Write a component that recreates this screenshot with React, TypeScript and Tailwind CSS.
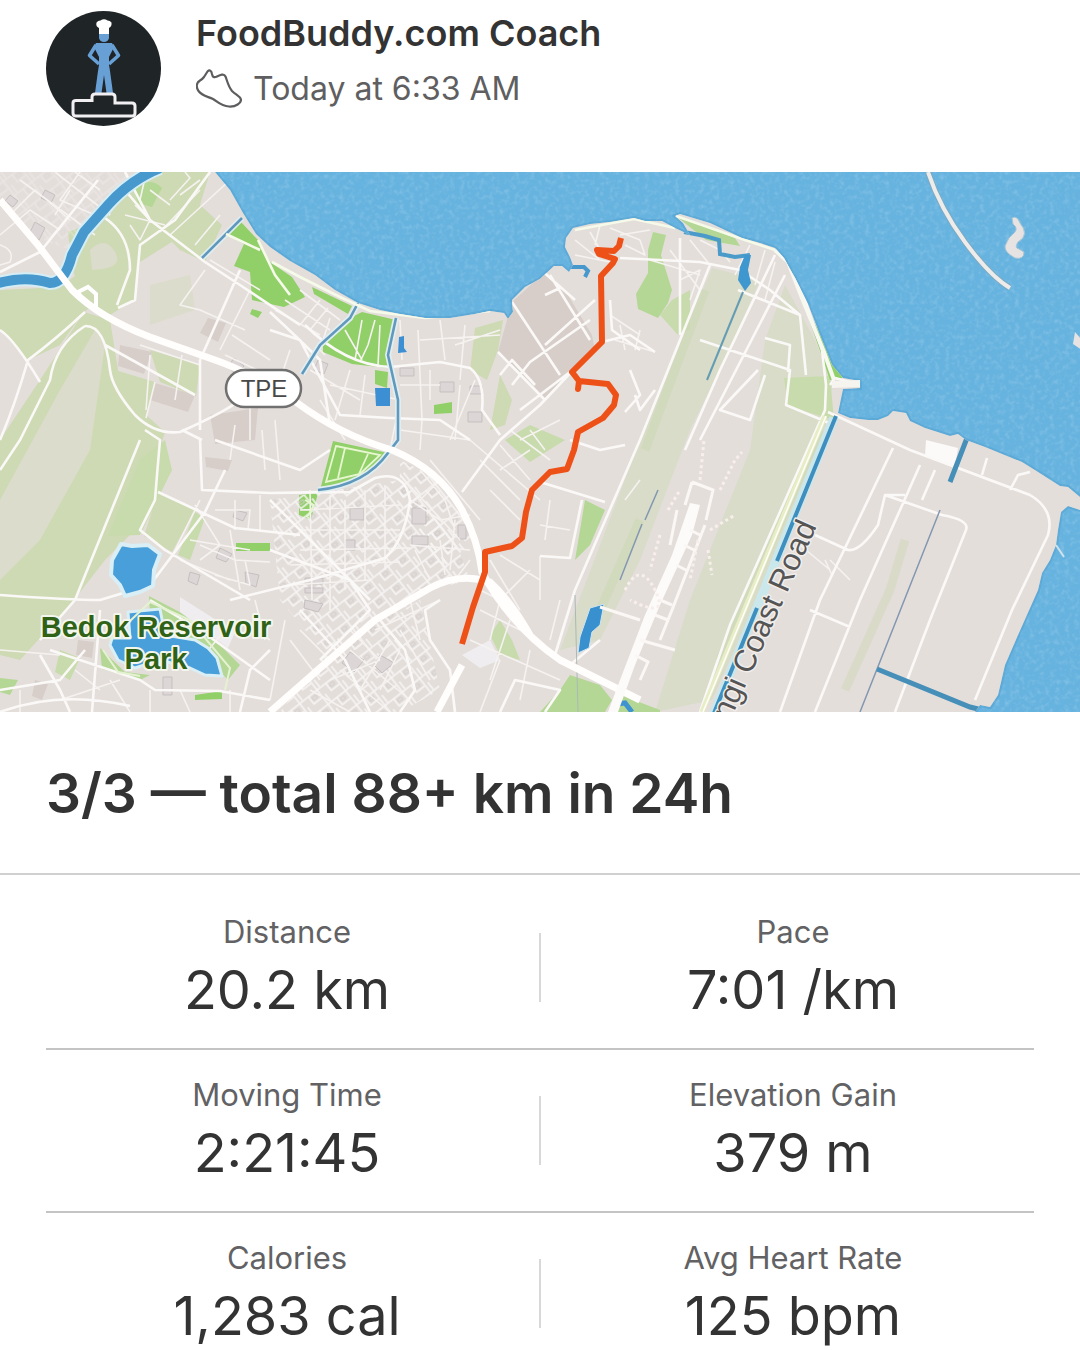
const stats = [
  [
    { label: "Distance", value: "20.2 km" },
    { label: "Pace", value: "7:01 /km" },
  ],
  [
    { label: "Moving Time", value: "2:21:45" },
    { label: "Elevation Gain", value: "379 m" },
  ],
  [
    { label: "Calories", value: "1,283 cal" },
    { label: "Avg Heart Rate", value: "125 bpm" },
  ],
];

function Avatar() {
  return (
    <svg viewBox="0 0 115 115" className="size-[115px] shrink-0" role="img" aria-label="FoodBuddy.com Coach">
      <circle cx="57.5" cy="57.5" r="57.5" fill="#1f2426" />
      <g fill="#68a0d6">
        <path d="M53 20H63V27Q62 31 58 31Q54 31 53 27Z" />
        <path d="M50 32H66L68 36L63 46V54L64 60L67 82H60.500L58 64L55.500 82H49L52 60L53 54V46L48 36Z" />
        <path d="M50 34L43.500 44.500L53 53M66 34L72.500 44.500L63 53" fill="none" stroke="#68a0d6" strokeWidth="3.600" strokeLinejoin="round" />
      </g>
      <path d="M53 23V17Q49.500 15.500 50.500 11.500Q52 9.500 54.500 9.500Q58 7 61.500 9.500Q64 9.500 65.500 11.500Q66 15.500 63 17V23Z" fill="#fff" />
      <path d="M30 105Q27 105 27 102V92Q27 89.500 30 89.500H46V86Q46 83 49 83H66Q69 83 69 86V92H86Q89 92 89 95V102Q89 105 86 105Z" fill="#1f2426" stroke="#f1eff1" strokeWidth="3" />
    </svg>
  );
}

function ShoeIcon() {
  return (
    <svg viewBox="196 69 47 40" className="h-10 w-[47px] shrink-0" fill="none" stroke="#5d5d5f" strokeWidth="2.2" strokeLinejoin="round" aria-hidden="true">
      <path d="M207.500 71.500L204 77Q202.500 79 200 80.500C196 83 196 87 198.500 91C202 96 208 96.500 213 99C218 102 221 106 229 106.500C236 107 241 103 241 99.500C240 96 236 95 232 91C228 86 227 80 225.500 76.500C224 73 220 75 217 76.500C214 78 212.500 77 212 74C211.500 70.500 209.500 69.500 207.500 71.500Z" />
    </svg>
  );
}

const LAND =
  "M0 172H215L230 190L243 213L256 234L270 247L290 261L315 275L335 290L358 303L380 310L400 314L425 318L450 318L475 314L490 311L504 313L508 319L513 312L512 300L525 287L540 279L554 266L562 266L569 272L573 265L570 257L565 247L566 238L573 228L590 224L610 222L634 218L645 221L662 221L675 228L690 235L683 223L675 216L680 214L710 223L742 238L760 243L775 248L784 258L795 278L808 304L820 335L832 365L843 378L860 381V388L843 389L838 413L850 418L868 420L878 420L888 416L893 411L906 413L910 421L925 428L950 436L958 434L966 440L985 447L1022 462L1038 472L1060 486L1068 487L1080 497V510L1068 506L1061 512L1058 530L1056 545L1050 560L1042 573L1038 590L1030 608L1018 635L1005 665L998 695L990 707L980 705L975 712H0Z";

const PALE_GREEN = [
  "M0 290L60 287L75 276L100 300L84 312L60 345L28 360L0 330Z",
  "M68 232L110 215L130 178L160 172H210L200 205L175 240L140 262L135 300L105 318L80 290L72 268Z",
  "M84 312L110 320L118 370L135 405L165 432L150 480L135 530L105 560L70 605L20 660L0 655V440L40 380Z",
  "M170 240L200 205L222 225L205 262L180 250Z",
  "M150 350L200 365L196 396L160 382Z",
  "M115 370L155 382L146 418L122 408Z",
  "M158 492L195 510L172 552L144 536Z",
  "M475 328L503 320L498 350L487 380L470 370Z",
  "M500 375L512 400L505 425L490 430Z",
];

const AIRFIELD = [
  "M712 268L760 280L725 360L690 430L640 560L600 640L560 650L640 440Z",
  "M785 285L815 340L832 385L828 430L775 560L712 700L655 712L690 600L750 450L765 340Z",
];

const SOFT_PATCHES = [
  "M95 330L105 345L90 450L40 540L0 580V500L60 390Z",
  "M90 250Q105 235 115 252T92 270Z",
  "M150 285L190 275L195 310L150 325Z",
];

const GREEN = [
  "M241 222L226 234L244 244L234 266L250 272L252 300L284 307L305 297L292 277L270 262L258 240Z",
  "M323 343L350 318L362 312L396 320L388 368L352 364L323 352Z",
  "M333 441L388 453L362 479L320 490Z",
  "M299 495L318 493L311 520L299 515Z",
  "M375 370L388 372L387 388L375 384Z",
  "M434 405L452 402L452 413L434 414Z",
  "M236 543H270V551H236Z",
  "M195 695L222 691V699L195 700Z",
  "M312 287L352 306L348 314L314 294Z",
  "M798 288L832 360L843 378L830 380L818 345Z",
  "M252 309L262 312L258 318L250 314Z",
];

const MID_GREEN = [
  "M653 232L666 235L661 255L672 290L668 303L658 318L638 309L636 294L648 273L648 250Z",
  "M134 190Q150 175 162 188L152 207L138 203Z",
  "M149 596L195 620L240 665L228 680L190 640L150 615Z",
  "M100 648L125 672L150 675L140 680L102 669Z",
  "M676 216L735 238L740 246L706 240Z",
  "M570 675L600 685L612 700L605 712H540L560 690Z",
  "M618 694L660 710V712H610Z",
  "M585 500L605 510L590 545L575 560Z",
  "M0 678L18 680L10 695L0 692Z",
];

const FADED_GREEN = [
  "M672 300L690 290L690 330L678 335L660 315Z",
  "M784 378L830 376L834 420L788 406Z",
  "M500 620L512 640L520 660L500 655L490 635Z",
  "M165 440L172 470L140 535L108 536L140 460Z",
  "M60 650L80 658L70 680L55 672Z",
  "M195 512L205 518L190 560L178 555Z",
  "M505 440L530 425L565 440L530 462Z",
];

const BROWN = [
  "M512 302L545 272L565 290L592 335L595 350L545 400L498 352Z",
  "M120 345L152 352L144 374L118 366Z",
  "M155 383L195 395L188 412L150 400Z",
  "M208 318L226 323L218 342L200 333Z",
  "M210 415L258 408L255 440L215 444Z",
  "M205 457L232 460L228 471L206 467Z",
  "M35 680L48 684L42 700L32 696Z",
  "M78 640L94 642L92 658L76 655Z",
];

const MAJOR = [
  "M0 200L38 245L72 290Q100 318 150 337L215 360Q250 372 296 402Q340 435 392 450Q440 470 462 510Q478 540 482 572Q510 625 560 660L612 686L640 700",
  "M270 712L375 620L430 588Q460 572 490 582Q510 600 530 635",
  "M437 712L462 665",
];

const ROADS = [
  "M85 312Q55 340 28 360Q15 405 0 440",
  "M85 326Q55 345 50 380L20 440L0 470",
  "M0 330Q15 340 40 382",
  "M85 326Q105 325 110 370Q112 388 135 415Q155 435 180 432Q225 412 240 400",
  "M140 440L75 600L40 640",
  "M145 430L160 440L157 475L155 500L140 530L165 550L250 600",
  "M0 595Q70 600 100 600L150 585L205 512L225 470",
  "M158 492L235 528L300 535",
  "M200 440L202 490L270 493L320 492",
  "M182 430L202 440M200 360L200 430M240 270L200 360",
  "M105 345L195 395",
  "M0 272L40 252L98 180",
  "M125 190L150 220L205 262L240 285L300 325",
  "M210 172L175 220L140 245L135 300L118 308",
  "M105 218Q130 235 130 270L117 305",
  "M125 172L150 220",
  "M215 440L300 470L330 450",
  "M230 600L310 580L385 558Q405 540 410 500Q405 470 375 478L350 492L270 493",
  "M305 325Q345 365 390 367L440 362L470 368Q485 380 482 410L500 435",
  "M270 330L300 340L340 415L390 418L440 420L470 440",
  "M270 312Q300 340 320 360L330 425",
  "M270 550L350 580L370 610L320 660",
  "M300 610L345 660L370 712M270 500L330 560L370 600",
  "M592 350L540 405L500 440L462 492",
  "M545 345L595 300M575 300L530 260M512 302L560 375M498 352L545 400",
  "M512 385L530 362L590 320M500 375L512 360L535 385",
  "M550 275L590 340M545 295L560 288",
  "M620 258L700 262L740 270L770 290L800 315M680 238L680 335",
  "M710 265L680 340L640 440L575 590L555 655L570 665L600 640",
  "M785 275L700 440M775 255L720 370L685 450",
  "M738 290L800 315L806 375",
  "M788 258L805 300L822 350L826 385L825 410L730 625L700 712",
  "M830 385L835 378L858 384",
  "M828 412L910 450L1030 495Q1055 510 1048 535L1012 610L975 700",
  "M893 448L820 600L780 712M920 465L860 600L815 712M935 470L922 500",
  "M885 495L942 515Q970 520 966 530L930 620L895 712",
  "M815 535L848 550Q860 552 878 525L885 495L905 495M810 610L850 627",
  "M1010 490L1018 475L1030 472M982 475L987 458",
  "M610 300L612 330L640 350M602 342L630 335L655 352",
  "M630 370L640 395L625 412M570 372L520 410",
  "M635 395L640 410L655 390",
  "M700 340L790 370L786 405L834 425",
  "M765 338L790 345L788 372M758 370L720 410L750 420L765 375",
  "M540 482L605 502M582 500L570 558L540 556",
  "M400 712L415 690L405 650L380 620M455 712L450 670L430 640L425 610L440 600",
  "M50 650L140 680L155 690L220 691L270 700",
  "M40 655L60 690L70 712M100 610L92 712M0 690L60 680L85 650",
  "M150 600L200 630L270 680M240 712L250 670L270 650",
  "M500 712L515 680L560 690L545 712",
  "M570 440L600 450L625 445",
  "M0 712Q60 690 130 706",
];

const MINOR = [
  "M20 180L95 235M55 172L110 215M0 235L30 210L60 230M10 215L35 190L70 220",
  "M28 232L45 250M70 190L55 215M80 172L60 200L95 215",
  "M0 245Q15 250 10 262L0 265M75 172L100 190",
  "M140 345L200 365M150 355L146 410M182 355L175 400M155 382L146 418",
  "M170 235L230 180M160 232L200 190M210 260L260 290M195 245L220 215",
  "M180 195L200 180M170 200L190 178L185 172M150 190L170 205",
  "M135 205L150 220L140 240L130 225M125 215L165 225M145 178L140 200",
  "M205 270L180 305L200 310L245 330M250 290L220 350M232 335L270 360M225 355L290 385",
  "M300 290L340 320M285 300L330 330M275 310L320 335M300 325L320 300M310 330L328 308",
  "M330 318L320 350L325 355M345 330L362 360M362 320L355 360M375 320L368 345L360 362M380 325L378 365",
  "M400 320L402 360M418 330L422 420L420 450M440 320L445 360M455 345L500 330M465 325L460 380M420 340L500 335",
  "M400 385L440 385M430 370L430 400M475 380L450 440M460 385L455 440M400 430L470 440M400 400L390 450",
  "M330 385L400 400M350 370L335 420M310 370L360 400M320 400L345 440M365 375L360 415M290 350L280 380",
  "M235 425L230 460M250 405L250 440M262 430L265 470M275 420L280 480",
  "M230 530L235 560L270 562M195 505L220 545L200 560M200 500L170 560M215 510L250 510L248 530M235 500V530M260 495V530",
  "M200 545L235 560L240 590M180 560L230 580M190 540L250 550M215 575L250 585L245 560",
  "M300 530L400 530M310 490L312 600M330 495V610M345 500V590M365 490V580M385 485V570M300 510L400 505M300 550L410 548M290 565L400 562M290 585L370 580",
  "M410 500L440 520L470 515M400 475L460 540M420 470L445 500L455 530M440 480L420 500M430 460L480 520",
  "M410 545L470 550M415 550L430 580M440 540L445 575M455 520L450 570M470 560L455 580",
  "M500 445L530 480M480 460L520 500M490 490L520 520M470 440L540 500M500 470L530 450",
  "M520 440L560 420M510 430L550 460M530 430L545 450",
  "M375 630L440 600M350 650L410 700M340 670L390 712M330 680L380 660M390 640L360 690M400 630L430 680M310 690L350 712",
  "M380 690L400 650M420 640L410 600M350 630L380 660M300 630L330 660M290 640L320 680M285 620L270 700",
  "M480 590L500 600L490 640M510 620L490 680M470 640L560 680M500 660L480 712M530 650L520 700M480 610L520 630",
  "M540 556L540 600M490 560L520 610M500 555L540 580M530 570L500 600M560 600L550 640",
  "M575 240L600 260M590 232L600 250M610 228L640 240M620 235L650 230M575 255L610 262M600 225L595 245M625 245L645 255L640 240",
  "M650 260L700 275M670 250L700 290M690 240L710 265M680 280L700 270L690 300M700 240L720 250",
  "M720 250L730 262M750 245L735 275M765 250L755 285M775 262L765 300",
  "M615 340L655 352M620 325L625 350M640 330L635 350M610 315L640 335",
  "M550 500L545 540M540 525L570 530M640 480L625 500",
  "M0 650L60 655M20 690L20 712M110 680L130 712M150 690L150 712M60 700L120 680M180 690L190 712M75 670L100 690",
  "M225 630L200 660M240 620L270 640M230 690L230 712M255 600L265 640",
  "M800 545L830 570M830 560L850 580M825 560L832 575",
];

const CHANNELS = ["M302 374L320 345L350 318L358 303", "M396 318L388 355L398 400V440L388 453", "M242 218L202 258", "M388 453Q365 485 318 490"];

const BUILDINGS =
  "M45 190l10 5-4 8-10-5zM10 195l8 6-5 6-8-6zM35 222l10 6-6 12-10-6zM234 358l10 8-8 8-8-7zM318 360l10 4-4 10-10-4zM400 368h14v8h-14zM440 382h14v10h-14zM470 386h12v8h-12zM468 412h14v10h-14zM350 508h14v12h-14zM412 508h14v16h-14zM412 536h16v9h-16zM458 525h8v14h-8zM345 540h10v10h-10zM305 578h18v6h-18zM305 588h18v5h-18zM350 652l14 8-10 12-12-9zM380 655l14 8-12 10-8-8zM245 572l14 3-3 12-10-4zM190 572l10 3-3 10-9-4zM220 548l12 6-6 8-10-4zM235 510l12 3-4 8-10-4zM163 677h9v18h-9zM305 600l18 4-5 8-14-4z";

function RouteMap() {
  return (
    <svg viewBox="0 172 1080 540" className="block w-full" role="img" aria-label="Map of the run route">
      <defs>
        <filter id="ripple" x="0" y="0" width="100%" height="100%">
          <feTurbulence type="fractalNoise" baseFrequency="0.2" numOctaves="2" seed="4" />
          <feColorMatrix values="0 0 0 0 0.62  0 0 0 0 0.83  0 0 0 0 0.96  1.8 0 0 0 -0.84" />
        </filter>
        <pattern id="blocks" width="22" height="18" patternUnits="userSpaceOnUse" patternTransform="rotate(-38)">
          <path d="M0 1H22M1 0V18M12 1V10H22M5 18V9" fill="none" stroke="#f8f6f5" strokeWidth="1.5" />
          <path d="M14 4h5v3h-5z" fill="none" stroke="#d2cccb" />
        </pattern>
        <clipPath id="shore">
          <path d={LAND} />
        </clipPath>
      </defs>

      <rect y="172" width="1080" height="540" fill="#67b3df" />
      <rect y="172" width="1080" height="540" filter="url(#ripple)" opacity="0.3" />
      <path d={LAND} fill="#e4dedb" stroke="#4f9fd0" strokeWidth="4" strokeOpacity="0.5" />
      <path d={LAND} fill="#e4dedb" />

      <g clipPath="url(#shore)">
        <path d={PALE_GREEN.join("")} fill="#cddab4" />
        <path d={AIRFIELD.join("")} fill="#d8dcc8" />
        <path d={SOFT_PATCHES.join("")} fill="#dbdccb" />
        <path d={BROWN.join("")} fill="#d7cec9" />
        <path d={FADED_GREEN.join("")} fill="#c8dbac" />
        <path d={MID_GREEN.join("")} fill="#b4d795" />
        <path d={GREEN.join("")} fill="#91cf69" />
        <path d="M270 500L400 480L455 540L470 580L430 590L330 660L280 600Z" fill="url(#blocks)" />
        <path d="M320 660L420 600L440 690L400 712H280Z" fill="url(#blocks)" />
        <path d="M0 172H130L70 250L30 235L0 200Z" fill="url(#blocks)" opacity="0.3" />
        <path d="M400 460L440 480L475 540L440 570L400 500Z" fill="url(#blocks)" />
        <path d="M645 450L705 290M640 520L600 610M820 430L720 660" stroke="#ced9b8" strokeWidth="9" fill="none" opacity="0.7" />
        <path d="M905 540L890 590L845 690" stroke="#d6d8c2" strokeWidth="9" fill="none" opacity="0.7" />
        <path d={BUILDINGS} fill="#dcd6d6" stroke="#c5bfc0" />
        <path d="M180 597L235 632L228 648L180 612ZM462 655L490 640L500 660L480 668Z" fill="#efedf0" />
        <path d="M926 440L958 448L955 466L925 456Z" fill="#fbfaf9" />
        <path d={MINOR.join("")} fill="none" stroke="#f5f2f0" strokeWidth="1.6" strokeLinejoin="round" />
        <path d={ROADS.join("")} fill="none" stroke="#fbf9f7" strokeWidth="2.6" strokeLinejoin="round" />

        <path d="M-5 284Q25 275 50 283Q65 283 72 255L84 232L108 205Q130 180 160 168" fill="none" stroke="#d5edf4" strokeWidth="14" />
        <path d="M-5 284Q25 275 50 283Q65 283 72 255L84 232L108 205Q130 180 160 168" fill="none" stroke="#4698cd" strokeWidth="10" />
        <path d={CHANNELS.join("")} fill="none" stroke="#e0eef2" strokeWidth="6" />
        <path d={CHANNELS.join("")} fill="none" stroke="#6199bd" strokeWidth="2.6" />
        <path d="M121 544L132 546L148 545L160 554L154 570L153 586L140 592L125 596L120 585L111 575L112 560Z" fill="#489fd9" stroke="#d9eff5" strokeWidth="4" strokeLinejoin="round" />
        <path d="M128 612L160 609L165 635L195 640L208 648L217 658L222 676L205 675L190 668L160 660L135 668L118 660L110 645L112 638L130 638Z" fill="#489fd9" stroke="#d9eff5" strokeWidth="3" strokeLinejoin="round" />
        <path d="M375 388H390V406H376ZM399 337L404 336V348L407 352L398 353Z" fill="#3c8fd2" />
        <path d="M590 608L604 604L600 625L592 632L589 648L578 653L580 637Z" fill="#3990cf" stroke="#cfe5ee" />
        <path d="M568 267L584 267L588 271L585 277" fill="none" stroke="#4698cd" strokeWidth="4" />
        <path d="M684 232L705 236L719 240L720 254L735 257L750 255" fill="none" stroke="#4b9bca" strokeWidth="4" />
        <path d="M745 255H751L748 270L751 283L745 291L738 280L740 267Z" fill="#3f97d0" />
        <path d="M743 292L707 380" stroke="#649cb3" strokeWidth="2" />
        <path d="M658 490L645 520M642 524L620 580M940 510L860 712" stroke="#8397b0" strokeWidth="1.5" fill="none" />
        <path d="M575 595L578 712" stroke="#aab9b7" strokeWidth="1" />
        <path d="M834 418L712 718" stroke="#cae7eb" strokeWidth="9" />
        <path d="M836 416L777 561M757 608L712 718" stroke="#3e8fc0" strokeWidth="4" />
        <path d="M825 416L702 712" stroke="#e7edc5" strokeWidth="5" />
        <path d="M826 416L703 712" stroke="#fffefa" strokeWidth="1.5" />
        <path d="M967 438L950 482M877 669L970 707L990 712" stroke="#468fb9" strokeWidth="5" fill="none" />
        <path d="M617 704L625 703L632 712" stroke="#3f94d0" strokeWidth="5" fill="none" />

        <path d={MAJOR.join("")} fill="none" stroke="#fffefd" strokeWidth="7" strokeLinejoin="round" />
        <path d="M608 712L620 680L645 615L672 555L690 503L700 505L692 535L660 605L635 665L618 712Z" fill="#fcfbfa" />
        <path d="M692 482L713 490L706 520M692 482L685 505M677 510L670 545M705 525L672 610L660 640M640 640L675 650M635 655L648 662L640 680M600 607L640 620M690 530L700 535M684 545L694 550M676 565L686 570M660 600L672 605M655 615L668 620" fill="none" stroke="#faf7f5" strokeWidth="3" />
        <path d="M700 480L704 440M720 490L735 460L742 452M668 510L680 490M660 535L650 570M625 590Q640 560 655 590T630 600M710 530L735 515M708 550L712 575M698 540L690 580" fill="none" stroke="#f8eeeb" strokeWidth="3" strokeDasharray="3 3" />
        <path d="M85 303L78 292L88 287L96 294V308" fill="none" stroke="#fff" strokeWidth="4" />
        <path d="M258 240L275 275L290 295M272 262L300 277L340 297L370 311L425 318L490 311M226 234L260 250M575 230L634 219L675 228M676 216L742 239L775 250" fill="none" stroke="#f5fae9" strokeWidth="2.6" />
        <path d="M775 250L788 262L802 298L824 352L834 380" fill="none" stroke="#f7f8f0" strokeWidth="4" />
        <path d="M336 446L380 455L360 474L326 482ZM345 448L338 478M368 454L358 476M305 500L314 505L308 516" fill="none" stroke="#e6f6cf" strokeWidth="1.8" />
        <path d="M110 640L150 602L190 620L230 668L225 690M103 650L118 672L140 676" fill="none" stroke="#e5f2d2" strokeWidth="2" />
      </g>

      <path d="M928 172Q940 208 965 242T1010 288" fill="none" stroke="#7eaac1" strokeWidth="6" />
      <path d="M928 172Q940 208 965 242T1010 288" fill="none" stroke="#eeecea" strokeWidth="4" />
      <path d="M1012 218Q1017 215 1020 223Q1030 235 1018 242Q1014 248 1019 249L1024 252Q1024 260 1015 258Q1004 252 1005 246Q1008 237 1015 232Q1018 228 1013 224Z" fill="#e6e3e2" stroke="#a5c3d3" />
      <path d="M1075 332L1082 340V350L1073 344Z" fill="#e6e3e2" />
      <path d="M832 381L860 380V387L832 388Z" fill="#f6f4ef" />
      <path d="M1056 545L1064 557" stroke="#cfe3ec" strokeWidth="2" />

      <path
        d="M621 238L619 246L614 251L597 250L599 254L615 259L613 263L601 276L602 342L572 372L579 381L578 389L579 381L608 384L616 395L614 405L603 418L578 432L574 450L567 469L550 472L532 490L526 512L522 538L512 546L485 552L485 572L473 607L462 644"
        fill="none"
        stroke="#ee5118"
        strokeWidth="6"
        strokeLinejoin="round"
      />

      <rect x="226" y="370" width="75" height="37" rx="18.500" fill="#fff" stroke="#707070" strokeWidth="2.500" />
      <g fontFamily="'Liberation Sans', Arial, sans-serif">
        <text x="264" y="397" textAnchor="middle" fontSize="24" fill="#484848">TPE</text>
        <g fontSize="29" fontWeight="700" fill="#2f6216" stroke="#f3f6ec" strokeWidth="4" strokeLinejoin="round" paintOrder="stroke" textAnchor="middle">
          <text x="156" y="637">Bedok Reservoir</text>
          <text x="156" y="669">Park</text>
        </g>
        <text transform="translate(817 526) rotate(-66)" textAnchor="end" fontSize="31" fill="#555" stroke="#f1eeec" strokeWidth="3" strokeLinejoin="round" paintOrder="stroke">
          Changi Coast Road
        </text>
      </g>
    </svg>
  );
}

export default function App() {
  return (
    <main className="w-full bg-white font-['Inter',sans-serif] text-[#333]">
      <header className="flex gap-[35px] px-[46px] pt-[11px] pb-[46px]">
        <Avatar />
        <div>
          <h1 className="text-[36px] leading-[44px] font-semibold">FoodBuddy.com Coach</h1>
          <p className="mt-[14px] flex items-center gap-2.5 text-[32px] leading-10 text-[#5f5f61]">
            <ShoeIcon />
            Today at 6:33 AM
          </p>
        </div>
      </header>

      <RouteMap />

      <h2 className="border-b-2 border-[#d0d0d0] px-[46px] pt-[46px] pb-[45px] text-[55px] leading-[70px] font-semibold">
        3/3 — total 88+ km in 24h
      </h2>

      <section className="px-[46px] pt-3" aria-label="Run statistics">
        {stats.map((row) => (
          <dl key={row[0].label} className="flex border-b-2 border-[#c4c4c4] last:border-b-0">
            {row.map((stat, i) => (
              <div key={stat.label} className="relative flex-1 pt-[25px] pb-6 text-center">
                {i === 1 && <span className="absolute top-[46px] -left-px h-[69px] w-0.5 bg-[#d8d8d8]" />}
                <dt className={i === 0 ? "pr-3 text-[31px] leading-10 text-[#626264]" : "pl-3 text-[31px] leading-10 text-[#626264]"}>{stat.label}</dt>
                <dd className={i === 0 ? "mt-1 pr-3 text-[54px] leading-[68px]" : "mt-1 pl-3 text-[54px] leading-[68px]"}>{stat.value}</dd>
              </div>
            ))}
          </dl>
        ))}
      </section>
    </main>
  );
}
